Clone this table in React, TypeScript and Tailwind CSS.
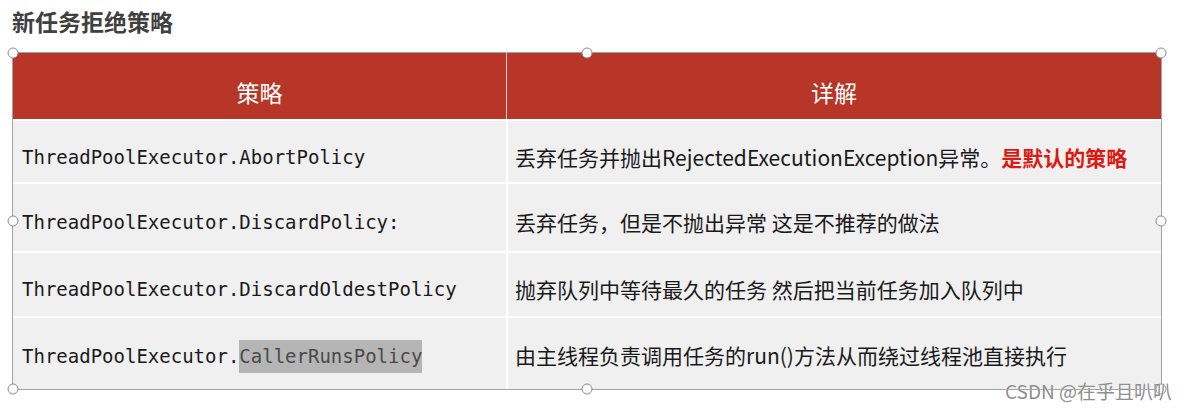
import type { FC, ReactNode } from 'react';

const mono = { fontFamily: '"DejaVu Sans Mono", "Liberation Mono", monospace' };
const cjk = { fontFamily: '"Noto Sans CJK SC", "Noto Sans", sans-serif' };

type Row = { h: string; pad: string; policy: ReactNode; detail: ReactNode };

const rows: Row[] = [
  {
    h: 'h-[61px]',
    pad: 'pt-[12px]',
    policy: 'ThreadPoolExecutor.AbortPolicy',
    detail: (
      <>
        丢弃任务并抛出RejectedExecutionException异常。
        <span className="font-bold text-[#dc1a12]">是默认的策略</span>
      </>
    ),
  },
  {
    h: 'h-[67px]',
    pad: 'pt-[10px]',
    policy: 'ThreadPoolExecutor.DiscardPolicy:',
    detail: '丢弃任务，但是不抛出异常 这是不推荐的做法',
  },
  {
    h: 'h-[63px]',
    pad: 'pt-[10px]',
    policy: 'ThreadPoolExecutor.DiscardOldestPolicy',
    detail: '抛弃队列中等待最久的任务 然后把当前任务加入队列中',
  },
  {
    h: 'h-[71px]',
    pad: 'pt-[5px]',
    policy: (
      <>
        ThreadPoolExecutor.
        <span className="inline-block bg-[#b5b5b5] text-[#4a4a4a] leading-[33px]">CallerRunsPolicy</span>
      </>
    ),
    detail: '由主线程负责调用任务的run()方法从而绕过线程池直接执行',
  },
];

const Handle: FC<{ className: string }> = ({ className }) => (
  <div
    className={`absolute w-[11px] h-[11px] rounded-full bg-white border-[1.5px] border-[#8c8c8c] -translate-x-1/2 -translate-y-1/2 ${className}`}
  />
);

export default function App() {
  return (
    <div className="relative w-[1191px] h-[409px] bg-white overflow-hidden" style={cjk}>
      {/* Title */}
      <h1 className="pl-[12px] pt-[7px] text-[23px] leading-[28px] font-bold text-[#404040]">新任务拒绝策略</h1>

      {/* Table with selection frame */}
      <div className="relative ml-[12px] mt-[17px] w-[1150px] border border-[#a3a3a3]">
        <div className="flex flex-col gap-[2px] bg-white">
          <div className="grid grid-cols-[493px_1fr] gap-x-[1px] h-[66px] bg-[#f4c9c3]">
            <div className="flex items-center justify-center pt-[12px] bg-[#b73628] text-white text-[23px]">策略</div>
            <div className="flex items-center justify-center pt-[12px] bg-[#b73628] text-white text-[23px]">详解</div>
          </div>

          {rows.map((r, i) => (
            <div key={i} className={`grid grid-cols-[493px_1fr] gap-x-[2px] ${r.h}`}>
              <div
                className={`flex items-center bg-[#f0f0f0] pl-[9px] text-[19px] text-[#1a1a1a] whitespace-nowrap ${r.pad}`}
                style={mono}
              >
                <span>{r.policy}</span>
              </div>
              <div
                className={`flex items-center bg-[#f0f0f0] pl-[7px] text-[21px] text-[#1a1a1a] whitespace-nowrap ${r.pad}`}
              >
                <span>{r.detail}</span>
              </div>
            </div>
          ))}
        </div>

        <Handle className="left-0 top-0" />
        <Handle className="left-1/2 top-0" />
        <Handle className="left-full top-0" />
        <Handle className="left-0 top-1/2" />
        <Handle className="left-full top-1/2" />
        <Handle className="left-0 top-full" />
        <Handle className="left-1/2 top-full" />
        <Handle className="left-full top-full" />
      </div>

      {/* Watermark */}
      <div className="absolute left-[1005px] top-[379px] text-[19px] leading-[24px] text-[#8e8e8e] whitespace-nowrap [text-shadow:0_0_1px_#fff]">
        CSDN @在乎且叭叭
      </div>
    </div>
  );
}
